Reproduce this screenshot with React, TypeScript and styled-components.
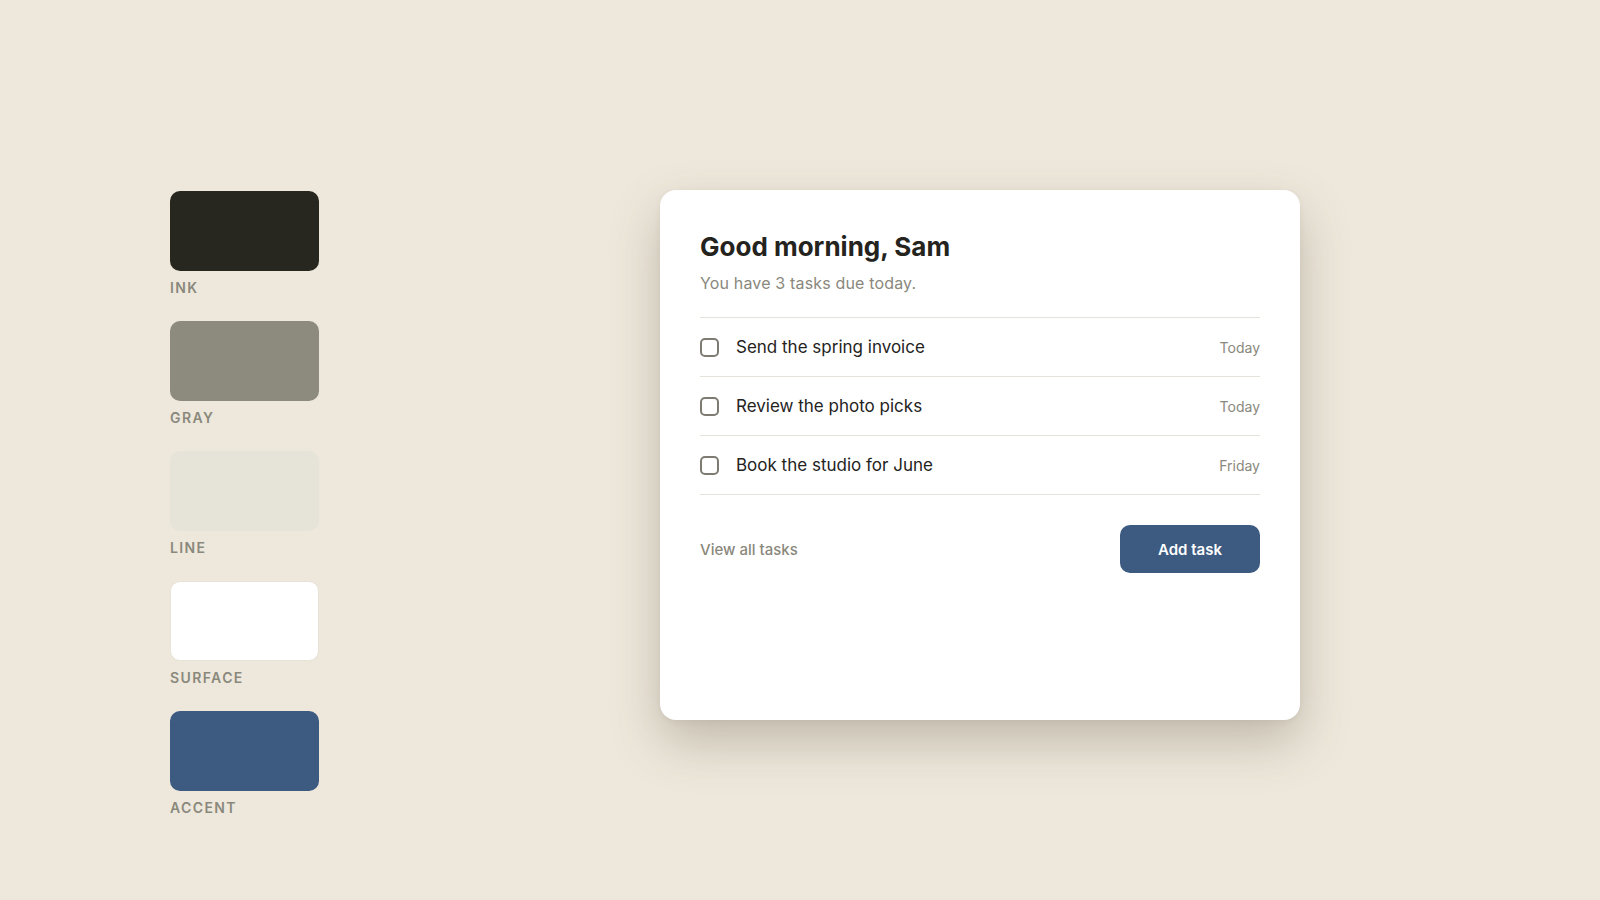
import React from "react";
import styled, { createGlobalStyle } from "styled-components";

const Global = createGlobalStyle`
  html, body { margin: 0; padding: 0; }
  body {
    background: #eee8dc;
    font-family: Inter, "Noto Sans", "Liberation Sans", sans-serif;
    -webkit-font-smoothing: antialiased;
  }
`;

const Page = styled.div`
  width: 1600px;
  height: 900px;
  box-sizing: border-box;
  padding: 191px 0 0 170px;
  display: flex;
  align-items: flex-start;
`;

const Palette = styled.div`
  display: flex;
  flex-direction: column;
  gap: 25px;
  width: 149px;
`;

const SwatchItem = styled.div`
  display: flex;
  flex-direction: column;
  gap: 8px;
`;

const Chip = styled.div<{ $color: string; $bordered?: boolean }>`
  width: 149px;
  height: 80px;
  border-radius: 10px;
  background: ${(p) => p.$color};
  box-sizing: border-box;
  border: ${(p) => (p.$bordered ? "1px solid #e8e3d8" : "none")};
`;

const SwatchLabel = styled.div`
  font-size: 14px;
  line-height: 17px;
  font-weight: 600;
  letter-spacing: 0.1em;
  color: #8a887c;
`;

const Card = styled.div`
  margin-left: 341px;
  margin-top: -1px;
  width: 640px;
  height: 530px;
  box-sizing: border-box;
  padding: 41px 40px 40px;
  background: #ffffff;
  border-radius: 16px;
  box-shadow: 0 22px 50px rgba(80, 70, 45, 0.28), 0 2px 6px rgba(80, 70, 45, 0.06);
  display: flex;
  flex-direction: column;
`;

const Title = styled.h1`
  margin: 0;
  font-size: 26px;
  line-height: 32px;
  font-weight: 700;
  color: #24231d;
`;

const Subtitle = styled.p`
  margin: 8px 0 22px;
  font-size: 16px;
  line-height: 24px;
  letter-spacing: 0.01em;
  color: #8a887c;
`;

const TaskList = styled.ul`
  list-style: none;
  margin: 0;
  padding: 0;
  border-top: 1px solid #e6e3da;
`;

const TaskRow = styled.li`
  display: flex;
  align-items: center;
  height: 58px;
  border-bottom: 1px solid #e6e3da;
`;

const Box = styled.span`
  width: 19px;
  height: 19px;
  box-sizing: border-box;
  border: 2px solid #7e7c72;
  border-radius: 5px;
  flex-shrink: 0;
  margin-right: 17px;
`;

const TaskText = styled.span`
  flex: 1;
  font-size: 17px;
  line-height: 24px;
  color: #24231d;
`;

const Due = styled.span`
  font-size: 14px;
  color: #8a887c;
`;

const Footer = styled.div`
  margin-top: 30px;
  display: flex;
  align-items: center;
  justify-content: space-between;
`;

const LinkText = styled.span`
  font-size: 15px;
  font-weight: 500;
  color: #8a887c;
`;

const Button = styled.button`
  width: 140px;
  height: 48px;
  border: none;
  border-radius: 10px;
  background: #3d5a80;
  color: #ffffff;
  font-family: inherit;
  font-size: 15px;
  font-weight: 600;
`;

const swatches = [
  { name: "INK", color: "#27261f" },
  { name: "GRAY", color: "#8c8b7e" },
  { name: "LINE", color: "#e6e3d8" },
  { name: "SURFACE", color: "#ffffff", bordered: true },
  { name: "ACCENT", color: "#3d5a80" },
];

const tasks = [
  { title: "Send the spring invoice", due: "Today" },
  { title: "Review the photo picks", due: "Today" },
  { title: "Book the studio for June", due: "Friday" },
];

export default function App() {
  return (
    <>
      <Global />
      <Page>
        <Palette>
          {swatches.map((s) => (
            <SwatchItem key={s.name}>
              <Chip $color={s.color} $bordered={s.bordered} />
              <SwatchLabel>{s.name}</SwatchLabel>
            </SwatchItem>
          ))}
        </Palette>
        <Card>
          <Title>Good morning, Sam</Title>
          <Subtitle>You have 3 tasks due today.</Subtitle>
          <TaskList>
            {tasks.map((t) => (
              <TaskRow key={t.title}>
                <Box />
                <TaskText>{t.title}</TaskText>
                <Due>{t.due}</Due>
              </TaskRow>
            ))}
          </TaskList>
          <Footer>
            <LinkText>View all tasks</LinkText>
            <Button>Add task</Button>
          </Footer>
        </Card>
      </Page>
    </>
  );
}
